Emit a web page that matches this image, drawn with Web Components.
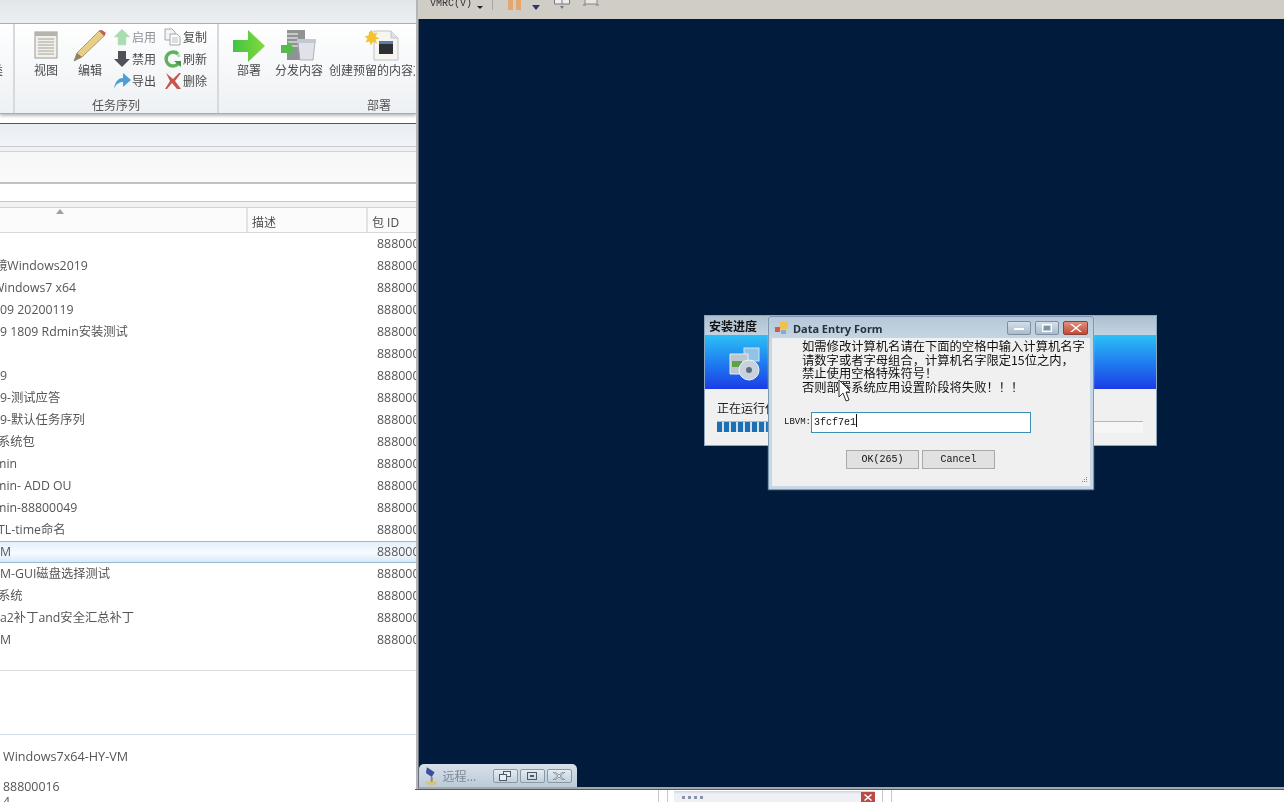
<!DOCTYPE html>
<html lang="zh"><head><meta charset="utf-8"><title>Task sequences</title>
<style>
html,body{margin:0;padding:0;width:1284px;height:802px;overflow:hidden;background:#fff}
body{font:12px "Open Sans","Noto Sans CJK SC",sans-serif;color:#4a4a4a}
</style></head><body>
<console-app>
  <left-pane slot="left">
    <ribbon-bar>
      <ribbon-group label="" w="15"><span class="cut">类</span></ribbon-group>
      <ribbon-group label="任务序列" w="204">
        <big-btn label="视图" w="44" style="margin-left:9px"><svg width="34" height="30" viewBox="0 0 34 30"><rect x="6" y="1" width="22" height="26" fill="#f1efe8" stroke="#9a9a96"/><rect x="6" y="1" width="22" height="4" fill="#b4b4b0"/><path d="M9 8h16M9 11h16M9 14h16M9 17h16M9 20h16M9 23h16" stroke="#a2a29e"/></svg></big-btn>
        <big-btn label="编辑" w="44"><svg width="34" height="32" viewBox="0 0 34 32"><path d="M1 31l3-8L27 0l5 5L9 27z" fill="#e9cf86" stroke="#9c8a5c" stroke-width=".8"/><path d="M4 23l5 4-8 4z" fill="#8d8269"/><path d="M26 1l5 5 2-3-4-3z" fill="#c0605a"/></svg></big-btn>
        <small-grid>
          <small-btn label="启用" dim><svg width="18" height="18" viewBox="0 0 18 18"><path d="M9 1l8 8h-4v8H5V9H1z" fill="#a9dcae" stroke="#c6e4c8" stroke-width=".6"/></svg></small-btn>
          <small-btn label="复制"><svg width="18" height="18" viewBox="0 0 18 18"><path d="M1 1h7l3 3v8H1z" fill="#f4f4f2" stroke="#8d96a3" stroke-width=".8"/><path d="M6 6h7l3 3v8H6z" fill="#fafaf8" stroke="#8d96a3" stroke-width=".8"/><path d="M8 10h6M8 12h6M8 14h6" stroke="#aeb4bc" stroke-width=".8"/></svg></small-btn>
          <small-btn label="禁用"><svg width="18" height="18" viewBox="0 0 18 18"><path d="M5 1h8v8h4l-8 8-8-8h4z" fill="#50525a"/></svg></small-btn>
          <small-btn label="刷新"><svg width="18" height="18" viewBox="0 0 18 18"><path d="M14 4A7 7 0 1 0 14 14" fill="none" stroke="#5eb25c" stroke-width="3.4"/><path d="M10 11h7v6z" fill="#3f9a46"/><path d="M14 4A7 7 0 0 1 15 7" fill="none" stroke="#b7dcb5" stroke-width="3"/></svg></small-btn>
          <small-btn label="导出"><svg width="18" height="18" viewBox="0 0 18 18"><path d="M1 17C2 9 6 6 10 6V1l8 7-8 7v-5C6 10 3 12 1 17z" fill="#4d9fd6"/></svg></small-btn>
          <small-btn label="删除"><svg width="18" height="18" viewBox="0 0 18 18"><path d="M2 1l7 6 6-6h2l-6 8 6 8h-4L8 11l-5 6H1l5-8z" fill="#c8544c"/></svg></small-btn>
        </small-grid>
      </ribbon-group>
      <ribbon-group label="部署" w="197" last>
        <big-btn label="部署" w="50" style="margin-left:5px"><svg width="34" height="32" viewBox="0 0 34 32"><defs><linearGradient id="ga" x1="0" x2="1"><stop offset="0" stop-color="#3fc443"/><stop offset="1" stop-color="#86d83c"/></linearGradient></defs><path d="M1 10h15V0l17 16-17 16V22H1z" fill="url(#ga)"/></svg></big-btn>
        <big-btn label="分发内容" w="50"><svg width="36" height="32" viewBox="0 0 36 32"><rect x="6" y="0" width="18" height="30" fill="#8f9393"/><path d="M6 4h11M6 8h11M6 12h11M6 16h11" stroke="#d8dad8" stroke-width="1.4"/><path d="M17 12h17l-2 18H19z" fill="#dfe2e8" stroke="#9fa3ad" stroke-width=".8"/><rect x="16" y="9" width="19" height="4" rx="1" fill="#c3c7d2"/><path d="M0 15h6v-4l8 8-8 8v-4H0z" fill="#59b94f"/></svg></big-btn>
        <big-btn label="创建预留的内容文件" w="86" clip style="margin-left:5px"><svg width="36" height="32" viewBox="0 0 36 32"><path d="M10 1h17l7 7v22H10z" fill="#f6f5f0" stroke="#bfc3c8"/><path d="M27 1v7h7" fill="#dfe3e6" stroke="#bfc3c8"/><rect x="15" y="14" width="14" height="10" fill="#2c2f33"/><rect x="15" y="11" width="14" height="3" fill="#5a7bb0"/><path d="M8 0l1.500 4 4-1.500-2 4 4 2-4 1 1.500 4-4-2-2 4-1.500-4-4 1 2-4-3-2 4-1L5 2z" fill="#f3c22d"/></svg></big-btn>
      </ribbon-group>
    </ribbon-bar>
    <band-strip></band-strip>
    <list-view>
      <list-row id-val="88800016"></list-row>
      <list-row id-val="88800017" clip="5">镜Windows2019</list-row>
      <list-row id-val="88800018" clip="7">Windows7 x64</list-row>
      <list-row id-val="88800019" clip="14">1809 20200119</list-row>
      <list-row id-val="88800020" clip="0">9 1809 Rdmin安装测试</list-row>
      <list-row id-val="88800021"></list-row>
      <list-row id-val="88800022">9</list-row>
      <list-row id-val="88800023">9-测试应答</list-row>
      <list-row id-val="88800024">9-默认任务序列</list-row>
      <list-row id-val="88800025" clip="2">系统包</list-row>
      <list-row id-val="88800026" clip="5">min</list-row>
      <list-row id-val="88800027" clip="5">min- ADD OU</list-row>
      <list-row id-val="88800028" clip="5">min-88800049</list-row>
      <list-row id-val="88800029" clip="2">TL-time命名</list-row>
      <list-row id-val="88800030" selected>M</list-row>
      <list-row id-val="88800031">M-GUI磁盘选择测试</list-row>
      <list-row id-val="88800032" clip="2">系统</list-row>
      <list-row id-val="88800033">a2补丁and安全汇总补丁</list-row>
      <list-row id-val="88800034">M</list-row>
    </list-view>
    <detail-panel></detail-panel>
  </left-pane>
  <vm-pane slot="right">
    <vm-toolbar></vm-toolbar>
    <vm-desktop>
      <install-window></install-window>
      <entry-dialog></entry-dialog>
      <svg id="cursor" style="position:absolute;left:419px;top:360px" width="12" height="23" viewBox="0 0 12 23"><path d="M1 1v17l4-4 3 8 3-1-3-8h5z" fill="#fff" stroke="#333" stroke-width="1"/></svg>
      <rc-tab></rc-tab>
    </vm-desktop>
    <thumb-strip></thumb-strip>
  </vm-pane>
</console-app>
<script>
function def(name, css, html, init){
  customElements.define(name, class extends HTMLElement{
    connectedCallback(){
      if(this.shadowRoot) return;
      const r=this.attachShadow({mode:'open'});
      const h=typeof html==='function'?html(this):html;
      r.innerHTML='<style>'+css+'</style>'+h;
      if(init) init(this,r);
    }
  });
}
def('console-app',':host{display:flex;width:1284px;height:802px;overflow:hidden;filter:blur(.4px)}','<slot name="left"></slot><slot name="right"></slot>');
def('left-pane',':host{display:flex;flex-direction:column;width:416px;height:802px;overflow:hidden;background:#fff;flex:none}'+
 '.top{height:23px;flex:none;background:linear-gradient(#e2e6ea,#eceff1);border-bottom:1px solid #a9adb1}',
 '<div class="top"></div><slot></slot>');
def('ribbon-bar',':host{display:flex;height:89px;flex:none;background:linear-gradient(#fff 0,#f9fafb 30%,#eef1f4);border-bottom:1px solid #a8acb0;box-shadow:0 2px 3px #b9bcc0}','<slot></slot>');
def('ribbon-group',':host{display:flex;flex:none;box-sizing:border-box;position:relative;border-right:2px solid #d6d9dd;padding-bottom:17px;overflow:hidden}'+
 ':host([last]){border-right:0}'+
 '.lab{position:absolute;left:0;right:0;bottom:0;text-align:center;font-size:12px;line-height:15px;color:#555}'+
 '.in{display:flex;align-items:flex-start;padding-top:6px;flex:1}'+
 '::slotted(.cut){margin:33px 0 0 -9px;line-height:16px;font-size:12px}',
 h=>`<div class="in"><slot></slot></div><div class="lab">${h.getAttribute('label')}</div>`,
 h=>{h.style.width=h.getAttribute('w')+'px'; if(h.getAttribute('last')!==null){const l=h.shadowRoot.querySelector('.lab');l.style.paddingLeft='148px';l.style.textAlign='left'}});
def('big-btn',':host{display:flex;flex-direction:column;align-items:center;flex:none}'+
 '.i{height:32px;display:flex;align-items:center;justify-content:center}'+
 '.t{margin-top:1px;line-height:16px;font-size:12px;color:#4a4a4a;white-space:nowrap}'+
 ':host([clip]){overflow:hidden}',
 h=>`<div class="i"><slot></slot></div><div class="t">${h.getAttribute('label')}</div>`,
 h=>{h.style.width=h.getAttribute('w')+'px'; if(h.hasAttribute('clip')){h.style.alignItems='flex-start';const i=h.shadowRoot.querySelector('.i');i.style.width='86px';i.style.paddingLeft='20px';i.style.boxSizing='border-box'}});
def('small-grid',':host{display:grid;grid-template-columns:51px 50px;grid-auto-rows:22px;margin:-4px 0 0 1px}','<slot></slot>');
def('small-btn',':host{display:flex;align-items:center;gap:1px;font-size:12px;color:#4a4a4a;white-space:nowrap}:host([dim]){color:#8b8f94}.i{width:18px;height:18px;display:flex}',
 h=>`<span class="i"><slot></slot></span><span>${h.getAttribute('label')}</span>`);
def('band-strip',':host{display:block;flex:none;margin-top:9px}'+
 '.a{height:22px;border-top:1px solid #4d5560;background:linear-gradient(#e9edf2,#f1f4f8)}'+
 '.b{height:4px;border-top:1px solid #c7cacd;background:#f0f1f3;border-bottom:1px solid #d2d4d7}'+
 '.c{height:30px;background:linear-gradient(#f6f7f8,#fafafa)}'+
 '.d{height:2px;background:#bfc1c4}'+
 '.e{height:17px;background:#fff}'+
 '.f{height:5px;border-top:1px solid #c4c6c9;background:#f1f2f3;border-bottom:1px solid #cfd1d4}',
 '<div class="a"></div><div class="b"></div><div class="c"></div><div class="d"></div><div class="e"></div><div class="f"></div>');
def('list-view',':host{display:block;flex:none;background:#fff}'+
 '.h{display:grid;grid-template-columns:248px 120px 1fr;height:25px;box-sizing:border-box;background:#fbfbfc;border-bottom:1px solid #d4d7db;font-size:12px;color:#4a4a4a}'+
 '.h div{border-right:2px solid #e2e4e7;padding:5px 0 0 4px;line-height:19px;white-space:nowrap;overflow:hidden}.h div:last-child{border:0}'+
 '.h .s{display:flex;justify-content:center;padding:0;position:relative}'+
 '.tri{width:0;height:0;border:4px solid transparent;border-top:0;border-bottom:5px solid #9ba0a6;margin:1px 0 0 -127px}'+
 '.f{height:19px;border-bottom:1px solid #d9dbdd}',
 '<div class="h"><div class="s"><span class="tri"></span></div><div>描述</div><div>包 ID</div></div><slot></slot><div class="f"></div>');
def('list-row',':host{display:grid;grid-template-columns:372px 1fr;height:22px;line-height:22px;box-sizing:border-box;font-size:12.3px;color:#555;white-space:nowrap;overflow:hidden}'+
 ':host([selected]){background:linear-gradient(#e1eefb,#f8fbff 55%,#d3e6fa);box-shadow:inset 0 1px 0 #9bb8d3,inset 0 -1px 0 #9bb8d3}'+
 '.n{overflow:hidden}.n span{display:block}.i{padding-left:5px;font-size:12.4px;overflow:hidden}',
 h=>`<div class="n"><span style="margin-left:${-(+h.getAttribute('clip')||0)}px"><slot></slot></span></div><div class="i">${h.getAttribute('id-val')}</div>`);
def('detail-panel',':host{display:block;flex:1;font-size:12.4px;color:#555;padding:0 0 0 3px;overflow:hidden;background:#fff}'+
 '.l{height:63px;margin-left:-3px;border-bottom:1px solid #d3e0e6}'+
 '.t{line-height:20px;margin-top:12px;font-size:12.6px}.u{line-height:16px;margin-top:12px}.v{line-height:14px}',
 '<div class="l"></div><div class="t">Windows7x64-HY-VM</div><div class="u">88800016</div><div class="v">4</div>');
def('vm-pane',':host{display:flex;flex-direction:column;flex:1;width:868px;height:802px;box-sizing:border-box;border-left:2px solid #b4b7b9;background:#fff}','<slot></slot>');
def('vm-toolbar',':host{display:flex;align-items:flex-end;height:19px;flex:none;overflow:hidden;background:#d0cdc6;padding:0 0 9px 12px;box-sizing:border-box;gap:0;color:#333;font:10px "Liberation Mono","Noto Sans CJK SC",monospace}'+
 'svg{display:block;flex:none}.t{line-height:12px;white-space:nowrap}',
 `<span class="t">VMRC(V)</span><svg style="margin-left:4px" width="8" height="5" viewBox="0 0 8 5"><path d="M1 1h6L4 4z" fill="#222"/></svg>
 <svg style="margin-left:8px" width="2" height="14"><rect width="1" height="14" fill="#a9a69f"/></svg>
 <svg style="margin-left:13px" width="16" height="12" viewBox="0 0 16 12"><rect x="1" width="5" height="12" fill="#e2a76c"/><rect x="9" width="5" height="12" fill="#e2a76c"/></svg>
 <svg style="margin-left:8px" width="10" height="5" viewBox="0 0 10 5"><path d="M1 0h8L5 5z" fill="#33336e"/></svg>
 <svg style="margin-left:12px" width="18" height="14" viewBox="0 0 18 14"><path d="M1.500 0v8h15V0M9 0v8" fill="#eee" stroke="#77787a"/><path d="M7 10h4l-2 3z" fill="#777"/></svg>
 <svg style="margin-left:11px" width="18" height="14" viewBox="0 0 18 14"><path d="M3 0v8h12V0" fill="#e8e6e0" stroke="#85857f"/><path d="M1 9h3M14 9h3" stroke="#777"/></svg>`);
def('vm-desktop',':host{display:block;position:relative;width:865px;height:768px;flex:none;background:#001b3b;border-left:1px solid #6a7076;border-bottom:2px solid #a4a8a9;overflow:hidden}','<slot></slot>');
def('thumb-strip',':host{display:flex;flex:1;background:#fff;margin-left:-3px;padding-left:243px;border-top:1px solid #55595c;overflow:hidden}'+
 '.b{width:1px;background:#c8c8c8;margin-right:8px}.b.w1{margin-right:6px}.w{width:201px;margin:1px 7px 0 0;background:linear-gradient(#cfd4dc 0,#eef0f6 3px);position:relative;display:flex;gap:3px;padding:5px 0 0 8px;box-sizing:border-box}'+
 '.w i{width:3px;height:3px;background:#8a94a8}.w i.x{position:absolute;right:0;top:1px;width:14px;height:11px;background:#b94a45;display:flex;align-items:center;justify-content:center}',
 '<div class="b"></div><div class="b w1"></div><div class="w"><i></i><i></i><i></i><i></i><i class="x"><svg width="8" height="7" viewBox="0 0 8 7"><path d="M1 0l3 2.500L7 0l1 1-3 2.500L8 6 7 7 4 4.500 1 7 0 6l3-2.500L0 1z" fill="#fff"/></svg></i></div><div class="b"></div><div class="b"></div>');
def('install-window',':host{position:absolute;left:285px;top:296px;width:453px;height:131px;display:flex;flex-direction:column;box-sizing:border-box;border:1px solid #8ba6bd;background:#f0f0f0;font-family:"Noto Sans CJK SC",sans-serif;color:#222}'+
 '.t{height:19px;flex:none;background:linear-gradient(#aebfd0,#c2d3e2);font-size:12px;font-weight:700;line-height:20px;padding-left:4px;color:#111}'+
 '.bn{height:54px;flex:none;background:linear-gradient(#2cc0f6,#1f7ff0 50%,#1c3ce6);padding:12px 0 0 23px;box-sizing:border-box}'+
 '.c{padding:10px 13px 0 12px;font-size:12px;line-height:18px}'+
 '.p{height:11px;margin-top:4px;border-top:1px solid #b6b6b6;background:#f6f6f6}'+
 '.p i{display:block;width:51px;height:10px;background:repeating-linear-gradient(90deg,#1d6fb3 0 5px,#cfe0ee 5px 7px)}',
 `<div class="t">安装进度</div><div class="bn"><svg width="34" height="34" viewBox="0 0 34 34"><rect x="16" y="1" width="15" height="13" fill="#8fc4e8" stroke="#cfe3f0"/><path d="M2 7h18v20H2z" fill="#b9c8cc" stroke="#e4ecef"/><rect x="4" y="14" width="10" height="6" fill="#5fa24e"/><circle cx="21" cy="23" r="10" fill="#c9d1dc" stroke="#eef2f6"/><circle cx="21" cy="23" r="3" fill="#5f6d83"/></svg></div>
 <div class="c">正在运行任务序列<div class="p"><i></i></div></div>`);
def('entry-dialog',':host{position:absolute;left:349px;top:297px;width:326px;height:174px;box-sizing:border-box;display:flex;flex-direction:column;border:1px solid #7d97ad;background:linear-gradient(#b7c9d9,#c6d7e5 25px);padding:0 3px 3px;border-radius:3px 3px 0 0;font-family:"Noto Sans CJK SC",sans-serif;color:#111;box-shadow:0 0 1px #fff}'+
 '.t{height:21px;flex:none;display:flex;align-items:center;gap:0;padding-left:2px;font:700 11px "Noto Sans","Open Sans",sans-serif;color:#26323c}'+
 '.t b{flex:1;font-weight:700;padding:2px 0 0 3px}'+
 '.wb{width:24px;height:14px;box-sizing:border-box;border:1px solid #7f8f9f;border-radius:2px;background:linear-gradient(#d4e0ea,#a9bccd);display:flex;align-items:center;justify-content:center;margin-right:4px}'+
 '.wb.x{width:25px;background:linear-gradient(#e1907d,#c14a36);border-color:#8a4238;margin-right:2px}'+
 '.c{flex:1;background:#f0f0f0;display:flex;flex-direction:column;position:relative}'+
 '.m{margin:2px 0 0 30px;font-size:12.3px;line-height:13.7px;white-space:nowrap}'+
 '.f{display:flex;align-items:center;margin:17px 0 0 12px;font:9px "Liberation Mono",monospace}'+
 '.in{width:220px;height:21px;box-sizing:border-box;border:1px solid #3b8fb3;background:#fff;font:10px/19px "Liberation Mono",monospace;padding-left:2px}'+
 '.in i{display:inline-block;width:1px;height:13px;background:#111;vertical-align:-2px}'+
 '.b{display:flex;gap:3px;margin:17px 0 0 74px}'+
 '.b span{width:73px;height:19px;box-sizing:border-box;border:1px solid #a9a9a9;background:#e1e1e1;font:10px/17px "Liberation Mono",monospace;text-align:center}'+
 '.g{position:absolute;right:2px;bottom:2px}',
 `<div class="t"><svg width="16" height="14" viewBox="0 0 16 14"><rect x="1" y="6" width="5" height="5" fill="#d5584a"/><rect x="6" y="1" width="8" height="7" fill="#eec24f"/><rect x="7" y="9" width="5" height="4" fill="#8fa8c9"/></svg><b>Data Entry Form</b>
 <span class="wb"><svg width="10" height="6"><rect y="3" width="10" height="2" fill="#fff"/></svg></span>
 <span class="wb"><svg width="10" height="8"><rect x=".5" y=".5" width="9" height="7" fill="none" stroke="#fff"/><rect x="2" y="2" width="6" height="4" fill="#7e93a8"/></svg></span>
 <span class="wb x"><svg width="12" height="8" viewBox="0 0 12 8"><path d="M2 0l4 3 4-3h2L7 4l5 4h-2L6 5 2 8H0l5-4L0 0z" fill="#fff"/></svg></span></div>
 <div class="c"><div class="m">如需修改计算机名请在下面的空格中输入计算机名字<br>请数字或者字母组合，计算机名字限定15位之内，<br>禁止使用空格特殊符号！<br>否则部署系统应用设置阶段将失败！！！</div>
 <div class="f"><span>LBVM:</span><span class="in">3fcf7e1<i></i></span></div>
 <div class="b"><span>OK(265)</span><span>Cancel</span></div>
 <svg class="g" width="8" height="8" viewBox="0 0 8 8"><path d="M6 1h1v1H6zM4 3h1v1H4zM6 3h1v1H6zM2 5h1v1H2zM4 5h1v1H4zM6 5h1v1H6z" fill="#888"/></svg></div>`);
def('rc-tab',':host{position:absolute;left:0;bottom:0;width:158px;height:23px;box-sizing:border-box;display:flex;align-items:center;border-radius:5px 5px 0 0;background:linear-gradient(#d6e0ea,#bccbda);padding:0 3px 0 5px;font:12px "Noto Sans CJK SC",sans-serif;color:#7d8894}'+
 '.n{width:52px;margin-left:3px;white-space:nowrap}'+
 '.b{width:26px;height:14px;box-sizing:border-box;border:1px solid #8b99a7;border-radius:2px;background:linear-gradient(#e4ebf1,#c3d0dc);display:flex;align-items:center;justify-content:center;margin-right:2px}',
 `<svg width="16" height="20" viewBox="0 0 16 20"><path d="M3 1l8 5-3 5-6-4z" fill="#3a4f96"/><path d="M1 16h13l-2 3H3z" fill="#d6c27a"/><rect x="7" y="11" width="2" height="5" fill="#9a8a4e"/></svg><span class="n">远程...</span>
 <span class="b"><svg width="12" height="10"><rect x="4.500" y=".5" width="7" height="5" fill="#e8edf2" stroke="#4d5a68"/><rect x=".5" y="3.500" width="7" height="6" fill="#e8edf2" stroke="#4d5a68"/></svg></span>
 <span class="b"><svg width="10" height="8"><rect x=".5" y=".5" width="9" height="7" fill="none" stroke="#4d5a68"/><rect x="3" y="3" width="4" height="2" fill="#4d5a68"/></svg></span>
 <span class="b"><svg width="12" height="8" viewBox="0 0 12 8"><path d="M2 0l4 3 4-3h2L7 4l5 4h-2L6 5 2 8H0l5-4L0 0z" fill="#f4f6f8" stroke="#5a6775" stroke-width=".7"/></svg></span>`);
</script>
</body></html>
